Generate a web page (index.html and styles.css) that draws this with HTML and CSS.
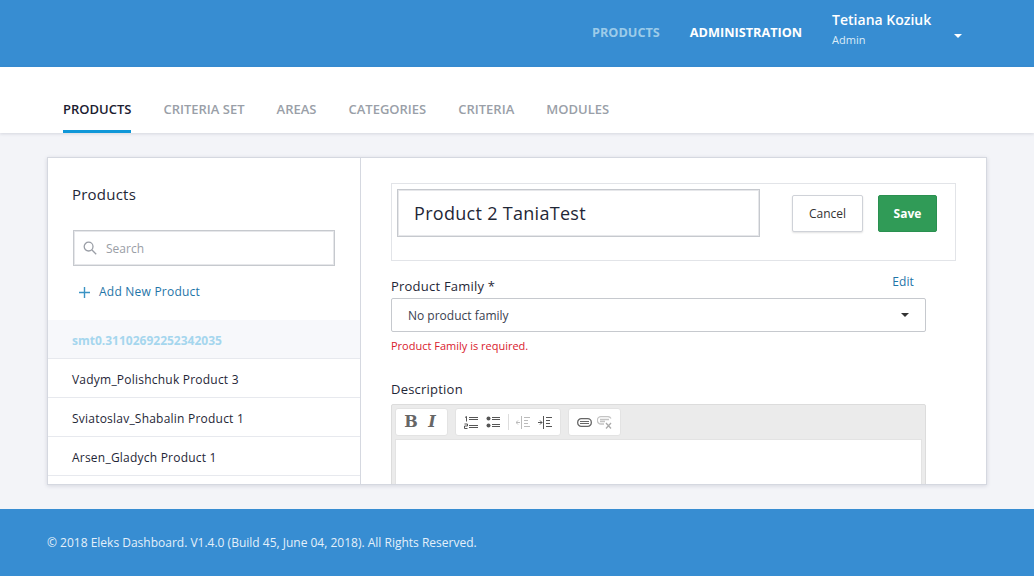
FILE: index.html
```html
<!DOCTYPE html>
<html lang="en">
<head>
<meta charset="UTF-8">
<title>Eleks Dashboard</title>
<link rel="stylesheet" href="styles.css">
</head>
<body>
<header class="topbar">
  <nav class="topnav">
    <a class="topnav-item dim">PRODUCTS</a>
    <a class="topnav-item">ADMINISTRATION</a>
  </nav>
  <div class="user">
    <div class="user-name">Tetiana Koziuk</div>
    <div class="user-role">Admin</div>
  </div>
  <span class="caret caret-white"></span>
</header>
<nav class="tabs">
  <a class="tab active">PRODUCTS</a>
  <a class="tab">CRITERIA SET</a>
  <a class="tab">AREAS</a>
  <a class="tab">CATEGORIES</a>
  <a class="tab">CRITERIA</a>
  <a class="tab">MODULES</a>
</nav>
<main class="content">
  <div class="card">
    <aside class="sidebar">
      <h2 class="side-title">Products</h2>
      <div class="search">
        <svg width="14" height="14" viewBox="0 0 14 14" fill="none" stroke="#9a9ea6" stroke-width="1.3"><circle cx="5.6" cy="5.6" r="4.4"/><path d="M9 9l4.2 4.2"/></svg>
        <span>Search</span>
      </div>
      <a class="add-new">
        <svg width="11" height="11" viewBox="0 0 11 11" stroke="#3a93c4" stroke-width="1.4"><path d="M5.5 0v11M0 5.5h11"/></svg>
        <span>Add New Product</span>
      </a>
      <ul class="product-list">
        <li class="product current">smt0.31102692252342035</li>
        <li class="product">Vadym_Polishchuk Product 3</li>
        <li class="product">Sviatoslav_Shabalin Product 1</li>
        <li class="product">Arsen_Gladych Product 1</li>
      </ul>
    </aside>
    <section class="detail">
      <div class="title-box">
        <div class="title-input">Product 2 TaniaTest</div>
        <button class="btn btn-cancel">Cancel</button>
        <button class="btn btn-save">Save</button>
      </div>
      <div class="field">
        <div class="field-head">
          <label class="field-label">Product Family *</label>
          <a class="edit-link">Edit</a>
        </div>
        <div class="select">
          <span>No product family</span>
          <span class="caret caret-dark"></span>
        </div>
        <p class="error">Product Family is required.</p>
      </div>
      <div class="field desc">
        <label class="field-label">Description</label>
        <div class="editor">
          <div class="toolbar">
            <div class="tool-group group-text">
              <span class="tool-text bold">B</span>
              <span class="tool-text italic">I</span>
            </div>
            <div class="tool-group group-list">
              <svg class="tool" width="14" height="13" viewBox="0 0 14 13" stroke="#555" fill="none"><path d="M5 1.5h9M5 3.5h9M5 9.5h9M5 11.5h9"/><path d="M1 1.5l1.5-1v5" stroke-width="1"/><path d="M0.5 8h3v2h-3v2.5h3" stroke-width="1"/></svg>
              <svg class="tool" width="14" height="13" viewBox="0 0 14 13" stroke="#555" fill="none"><circle cx="2.5" cy="2.5" r="2" fill="#555" stroke="none"/><circle cx="2.5" cy="9.5" r="2" fill="#555" stroke="none"/><path d="M6 1.5h8M6 3.5h8M6 8.5h8M6 10.5h8"/></svg>
              <span class="tool-sep"></span>
              <svg class="tool" width="14" height="13" viewBox="0 0 14 13" stroke="#bbb" fill="none"><path d="M0 6.5h4M2 4.5l-2 2 2 2M5.5 0v13M8 1.5h6M8 4.5h4M8 7.5h4M8 10.5h6"/></svg>
              <svg class="tool" width="14" height="13" viewBox="0 0 14 13" stroke="#555" fill="none"><path d="M0 6.5h4M2 4.5l2 2-2 2M5.5 0v13M8 1.5h6M8 4.5h4M8 7.5h4M8 10.5h6"/></svg>
            </div>
            <div class="tool-group group-link">
              <svg class="tool" width="15" height="9" viewBox="0 0 15 9" stroke="#666" stroke-width="1.3" fill="none"><rect x="0.7" y="0.7" width="13.6" height="7.6" rx="3.6"/><path d="M3 3.5h9M3 5.5h9" stroke-width="1"/></svg>
              <svg class="tool" width="15" height="13" viewBox="0 0 15 13" stroke="#c4c4c4" stroke-width="1.3" fill="none"><path d="M7 8H4a3.6 3.6 0 0 1 0-7.3h7a3.6 3.6 0 0 1 3 1.8M3 3.5h9M3 5.5h5"/><path d="M9 7l5 5.5M14 7l-5 5.5" stroke="#aaa"/></svg>
            </div>
          </div>
          <div class="editor-body"></div>
        </div>
      </div>
    </section>
  </div>
</main>
<footer class="footer">© 2018 Eleks Dashboard. V1.4.0 (Build 45, June 04, 2018). All Rights Reserved.</footer>
</body>
</html>
```

FILE: styles.css
```css
*{box-sizing:border-box;margin:0;padding:0}
html,body{height:576px;overflow:hidden}
body{font-family:"Open Sans",sans-serif;font-size:12px;color:#2b3344;background:#f3f4f8;display:flex;flex-direction:column}
a{cursor:pointer}

.topbar{height:67px;flex:none;background:#378dd2;display:flex;align-items:center;padding-left:592px;color:#fff}
.topnav{display:flex;gap:30px;margin-top:-3px}
.topnav-item{font-size:12.7px;font-weight:700;line-height:18px}
.topnav-item.dim{color:#9ccbe9}
.user{margin-left:30px;width:122px;margin-top:-8px}
.user-name{font-size:14px;font-weight:600;line-height:18px}
.user-role{font-size:11px;line-height:16px;margin-top:3px;color:#dcecf8}
.caret{display:inline-block;width:0;height:0;border-left:4px solid transparent;border-right:4px solid transparent}
.caret-white{border-top:4px solid #fff;margin-top:4px}
.caret-dark{border-top:4px solid #333}

.tabs{height:66px;flex:none;background:#fff;display:flex;gap:32px;padding-left:63px;box-shadow:0 1px 3px rgba(40,50,80,.15)}
.tab{font-size:13px;font-weight:600;color:#9a9fa8;padding-top:33px;line-height:18px}
.tab.active{color:#1b2030;border-bottom:3px solid #0f97d8}

.content{height:376px;flex:none;padding:24px 47px}
.card{height:328px;width:940px;background:#fff;border:1px solid #d5d8e0;box-shadow:0 1px 4px rgba(40,50,80,.15);display:flex;overflow:hidden}

.sidebar{width:313px;flex:none;border-right:1px solid #d5d8e0}
.side-title{font-size:15px;font-weight:500;letter-spacing:.22px;line-height:20px;margin:26px 0 0 24px;color:#1f2737}
.search{margin:26px 0 0 25px;width:262px;height:36px;border:1px solid #c6c9ce;box-shadow:inset 0 0 0 1px #e6e7ea;display:flex;align-items:center;gap:9px;padding-left:9px;color:#9a9ea6}
.add-new{display:flex;align-items:center;gap:9px;margin:17px 0 0 31px;color:#1f75a8;font-weight:500;letter-spacing:.23px;line-height:18px}
.product-list{list-style:none;margin-top:19px}
.product{height:39px;line-height:42px;padding-left:24px;border-bottom:1px solid #e7e9ee;color:#1f2737;font-weight:500;letter-spacing:.22px}
.product.current{background:#f7f8fb;color:#a5d6ee;font-weight:700;letter-spacing:0}

.detail{flex:1;min-width:0;padding:25px 30px 0}
.title-box{height:78px;width:565px;border:1px solid #e2e4e8;padding:5px;display:flex;align-items:flex-start}
.title-input{width:363px;height:48px;border:1px solid #c6c9ce;box-shadow:inset 0 0 0 1px #e6e7ea;font-size:18px;font-weight:500;letter-spacing:.3px;line-height:46px;padding-left:16px;color:#1f2737}
.btn{height:37px;margin-top:6px;font-family:inherit;font-size:12px;border-radius:2px}
.btn-cancel{width:71px;margin-left:32px;background:#fff;border:1px solid #cfd2d8;color:#333;box-shadow:0 1px 2px rgba(0,0,0,.12);padding-bottom:1px}
.btn-save{width:59px;margin-left:15px;background:#309b57;border:1px solid #2a9050;color:#fff;font-weight:700}

.field-head{display:flex;justify-content:space-between;width:535px;height:37px;padding-top:12px}
.field-label{font-size:13px;font-weight:500;letter-spacing:.22px;line-height:18px;padding-top:4px;display:block;color:#1f2737}
.edit-link{color:#1f75a8;font-weight:500;letter-spacing:.1px;margin-right:12px;line-height:18px}
.select{width:535px;height:34px;border:1px solid #c6c9ce;border-radius:2px;display:flex;align-items:center;justify-content:space-between;padding:0 16px;color:#3a4150}
.error{font-size:11px;color:#d9202e;margin-top:6px;line-height:15px}
.desc{margin-top:23px}
.editor{width:535px;margin-top:6px;background:#ebebeb;border:1px solid #dcdcdc;border-radius:2px;padding:3px}
.toolbar{display:flex;gap:7px;height:31px}
.tool-group{height:28px;background:#fff;border:1px solid #e3e3e3;border-radius:3px;display:flex;align-items:center;justify-content:space-between;padding:0 8px}
.group-text{width:53px}
.group-list{width:106px}
.group-link{width:53px}
.tool-text{font-family:"DejaVu Serif",serif;font-size:16px;font-weight:700;color:#666;width:14px;text-align:center;line-height:18px}
.tool-text.italic{font-style:italic}
.tool-sep{width:1px;height:16px;background:#ddd}
.editor-body{height:60px;background:#fff;border:1px solid #e3e3e3}

.footer{height:67px;flex:none;background:#378dd2;color:#e4f0fa;padding-left:47px;line-height:67px;font-size:12px}
```
